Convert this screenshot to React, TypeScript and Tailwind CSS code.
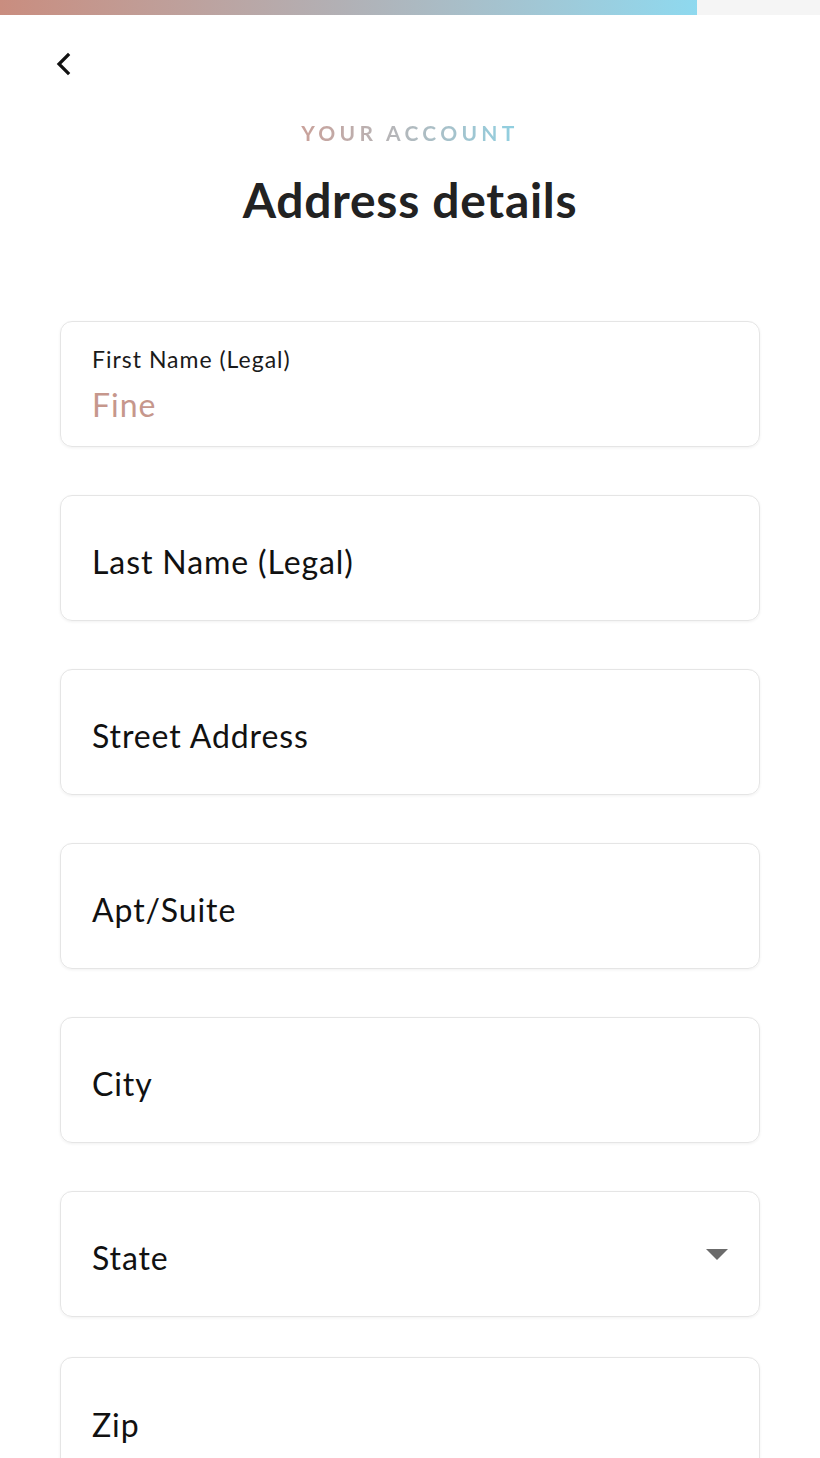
import React from "react";

const fields = ["Last Name (Legal)", "Street Address", "Apt/Suite", "City"];

export default function App() {
  return (
    <div className="w-[820px] h-[1458px] overflow-hidden bg-white" style={{ fontFamily: "Lato, 'Noto Sans', sans-serif" }}>
      <div className="flex h-[15px] bg-[#f5f5f5]">
        <div className="w-[697px] h-full bg-gradient-to-r from-[#c98d7f] via-[#b1b1b6] to-[#8ed9ef]" />
      </div>
      <div className="pl-[54px] pt-[36px] h-[80px]">
        <svg width="20" height="26" viewBox="0 0 20 26" fill="none">
          <path d="M14 4 L5 13 L14 22" stroke="#111" strokeWidth="3.2" strokeLinecap="square" />
        </svg>
      </div>
      <div className="flex flex-col items-center">
        <div className="mt-[24px] text-[21px] font-bold tracking-[4.3px] bg-gradient-to-r from-[#c9a19a] to-[#8ed0e2] bg-clip-text text-transparent leading-[28px]">
          YOUR ACCOUNT
        </div>
        <h1 className="mt-[25px] text-[48px] font-bold tracking-[0.7px] text-[#222] leading-[56px]">Address details</h1>
      </div>
      <div className="mt-[93px] px-[60px] flex flex-col gap-[48px]">
        <div className="h-[126px] rounded-[12px] border border-[#e5e5e5] shadow-[0_1px_3px_rgba(0,0,0,0.06)] px-[31px] pt-[23px]">
          <div className="text-[23px] tracking-[1px] text-[#1a1a1a] leading-[28px]">First Name (Legal)</div>
          <div className="mt-[15px] text-[32px] tracking-[1px] text-[#c6978c] leading-[34px]">Fine</div>
        </div>
        {fields.map((f) => (
          <div key={f} className="h-[126px] rounded-[12px] border border-[#e5e5e5] shadow-[0_1px_3px_rgba(0,0,0,0.06)] px-[31px] flex items-center">
            <div className="mt-[7px] text-[32px] tracking-[0.9px] text-[#111] leading-[36px]">{f}</div>
          </div>
        ))}
        <div className="h-[126px] rounded-[12px] border border-[#e5e5e5] shadow-[0_1px_3px_rgba(0,0,0,0.06)] pl-[31px] pr-[31px] flex items-center justify-between">
          <div className="mt-[7px] text-[32px] tracking-[0.9px] text-[#111] leading-[36px]">State</div>
          <svg width="22" height="11" viewBox="0 0 22 11">
            <path d="M0 0 L22 0 L11 11 Z" fill="#6b6b6b" />
          </svg>
        </div>
        <div className="-mt-[8px] h-[126px] rounded-[12px] border border-[#e5e5e5] shadow-[0_1px_3px_rgba(0,0,0,0.06)] pl-[31px] flex items-center">
          <div className="text-[32px] tracking-[0.9px] text-[#111] leading-[36px] mt-[10px]">Zip</div>
        </div>
      </div>
    </div>
  );
}
